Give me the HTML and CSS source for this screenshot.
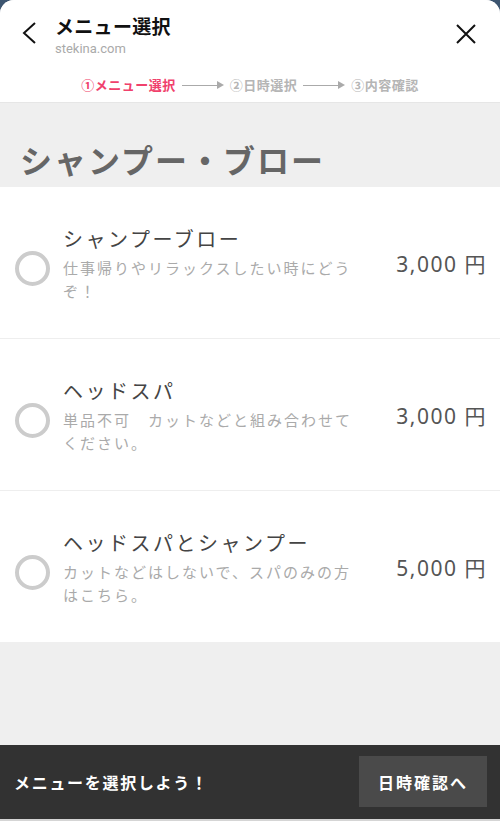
FILE: index.html
```html
<!DOCTYPE html>
<html lang="ja">
<head>
<meta charset="utf-8">
<title>メニュー選択</title>
<link rel="stylesheet" href="styles.css">
</head>
<body>
<div class="app">
  <header class="header">
    <div class="topbar">
      <svg class="back" width="24" height="24" viewBox="0 0 24 24"><path d="M17 2 L6 12 L17 22" fill="none" stroke="#111" stroke-width="2"/></svg>
      <div class="titles">
        <div class="title">メニュー選択</div>
        <div class="domain">stekina.com</div>
      </div>
      <svg class="close" width="24" height="24" viewBox="0 0 24 24"><path d="M3 3 L21 21 M21 3 L3 21" fill="none" stroke="#111" stroke-width="2"/></svg>
    </div>
    <div class="steps">
      <span class="step active">①メニュー選択</span>
      <span class="arrow"></span>
      <span class="step">②日時選択</span>
      <span class="arrow"></span>
      <span class="step">③内容確認</span>
    </div>
  </header>

  <section class="category">
    <h1 class="cat-title">シャンプー・ブロー</h1>
  </section>

  <ul class="menu">
    <li class="item">
      <span class="radio"></span>
      <div class="info">
        <div class="name">シャンプーブロー</div>
        <div class="desc">仕事帰りやリラックスしたい時にどうぞ！</div>
      </div>
      <div class="price">3,000 円</div>
    </li>
    <li class="item">
      <span class="radio"></span>
      <div class="info">
        <div class="name">ヘッドスパ</div>
        <div class="desc">単品不可　カットなどと組み合わせてください。</div>
      </div>
      <div class="price">3,000 円</div>
    </li>
    <li class="item">
      <span class="radio"></span>
      <div class="info">
        <div class="name">ヘッドスパとシャンプー</div>
        <div class="desc">カットなどはしないで、スパのみの方はこちら。</div>
      </div>
      <div class="price">5,000 円</div>
    </li>
  </ul>

  <div class="filler"></div>

  <footer class="footer">
    <div class="prompt">メニューを選択しよう！</div>
    <button class="next">日時確認へ</button>
  </footer>
</div>
</body>
</html>
```

FILE: styles.css
```css
* { box-sizing: border-box; }
html, body { margin: 0; padding: 0; }
body {
  background: #3d5570;
  font-family: "Noto Sans CJK JP", "Noto Sans", sans-serif;
}
.app {
  height: 821px;
  display: flex;
  flex-direction: column;
  background: #efefef;
  border-radius: 14px 14px 0 0;
  overflow: hidden;
}
.header {
  background: #fff;
  height: 103px;
  border-bottom: 1px solid #e6e6e6;
}
.topbar {
  display: flex;
  align-items: flex-start;
  padding: 13px 22px 0 18px;
}
.back { margin-top: 8px; flex: none; }
.titles { margin-left: 13px; }
.title {
  font-size: 19px;
  font-weight: bold;
  line-height: 26px;
  letter-spacing: 0.3px;
  color: #111;
}
.domain {
  font-family: Roboto, "Noto Sans", sans-serif;
  font-size: 13px;
  line-height: 20px;
  color: #aaa;
}
.close { margin-left: auto; margin-top: 9px; flex: none; }
.steps {
  display: flex;
  align-items: center;
  justify-content: center;
  margin-top: 16px;
  gap: 6px;
}
.step {
  font-size: 13px;
  font-weight: bold;
  line-height: 20px;
  letter-spacing: 0.5px;
  color: #b5b5b5;
}
.step.active { color: #f0416c; }
.arrow {
  position: relative;
  width: 36px;
  height: 1px;
  background: #aaa;
  margin-right: 6px;
}
.arrow::after {
  content: "";
  position: absolute;
  right: -6px;
  top: -4px;
  border-left: 7px solid #aaa;
  border-top: 4.5px solid transparent;
  border-bottom: 4.5px solid transparent;
}
.category {
  padding: 36px 20px 8px;
}
.cat-title {
  margin: 0;
  font-size: 32px;
  line-height: 40px;
  font-weight: bold;
  color: #666;
  letter-spacing: 2px;
}
.menu {
  list-style: none;
  margin: 0;
  padding: 0;
  background: #fff;
}
.item {
  display: flex;
  align-items: center;
  height: 152px;
  padding: 0 13px 0 15px;
  border-bottom: 1px solid #eee;
}
.item:last-child { height: 151px; border-bottom: none; }
.radio {
  flex: none;
  width: 35px;
  height: 35px;
  border: 4.5px solid #cccccc;
  border-radius: 50%;
  margin-top: 12px;
}
.info {
  flex: 1;
  margin-left: 13px;
  max-width: 292px;
}
.name {
  font-size: 20px;
  line-height: 30px;
  letter-spacing: 2.5px;
  color: #444;
  margin-bottom: 2px;
}
.desc {
  font-size: 15px;
  line-height: 23px;
  letter-spacing: 2px;
  color: #aaa;
}
.price {
  margin-left: auto;
  font-family: "Noto Sans", "Noto Sans CJK JP", sans-serif;
  font-size: 21px;
  letter-spacing: 1.5px;
  color: #555;
  white-space: nowrap;
}
.filler { flex: 1; background: #efefef; }
.footer {
  height: 76px;
  background: #323232;
  display: flex;
  align-items: center;
  padding: 0 13px 0 14px;
  border-bottom: 2px solid #d5d5d5;
}
.prompt {
  color: #fff;
  font-size: 16px;
  font-weight: bold;
  letter-spacing: 1.7px;
}
.next {
  margin-left: auto;
  width: 128px;
  height: 51px;
  border: none;
  background: #4a4a4a;
  color: #fff;
  font-family: "Noto Sans CJK JP", sans-serif;
  font-size: 16px;
  font-weight: bold;
  letter-spacing: 2px;
  margin-top: -1px;
}
```
